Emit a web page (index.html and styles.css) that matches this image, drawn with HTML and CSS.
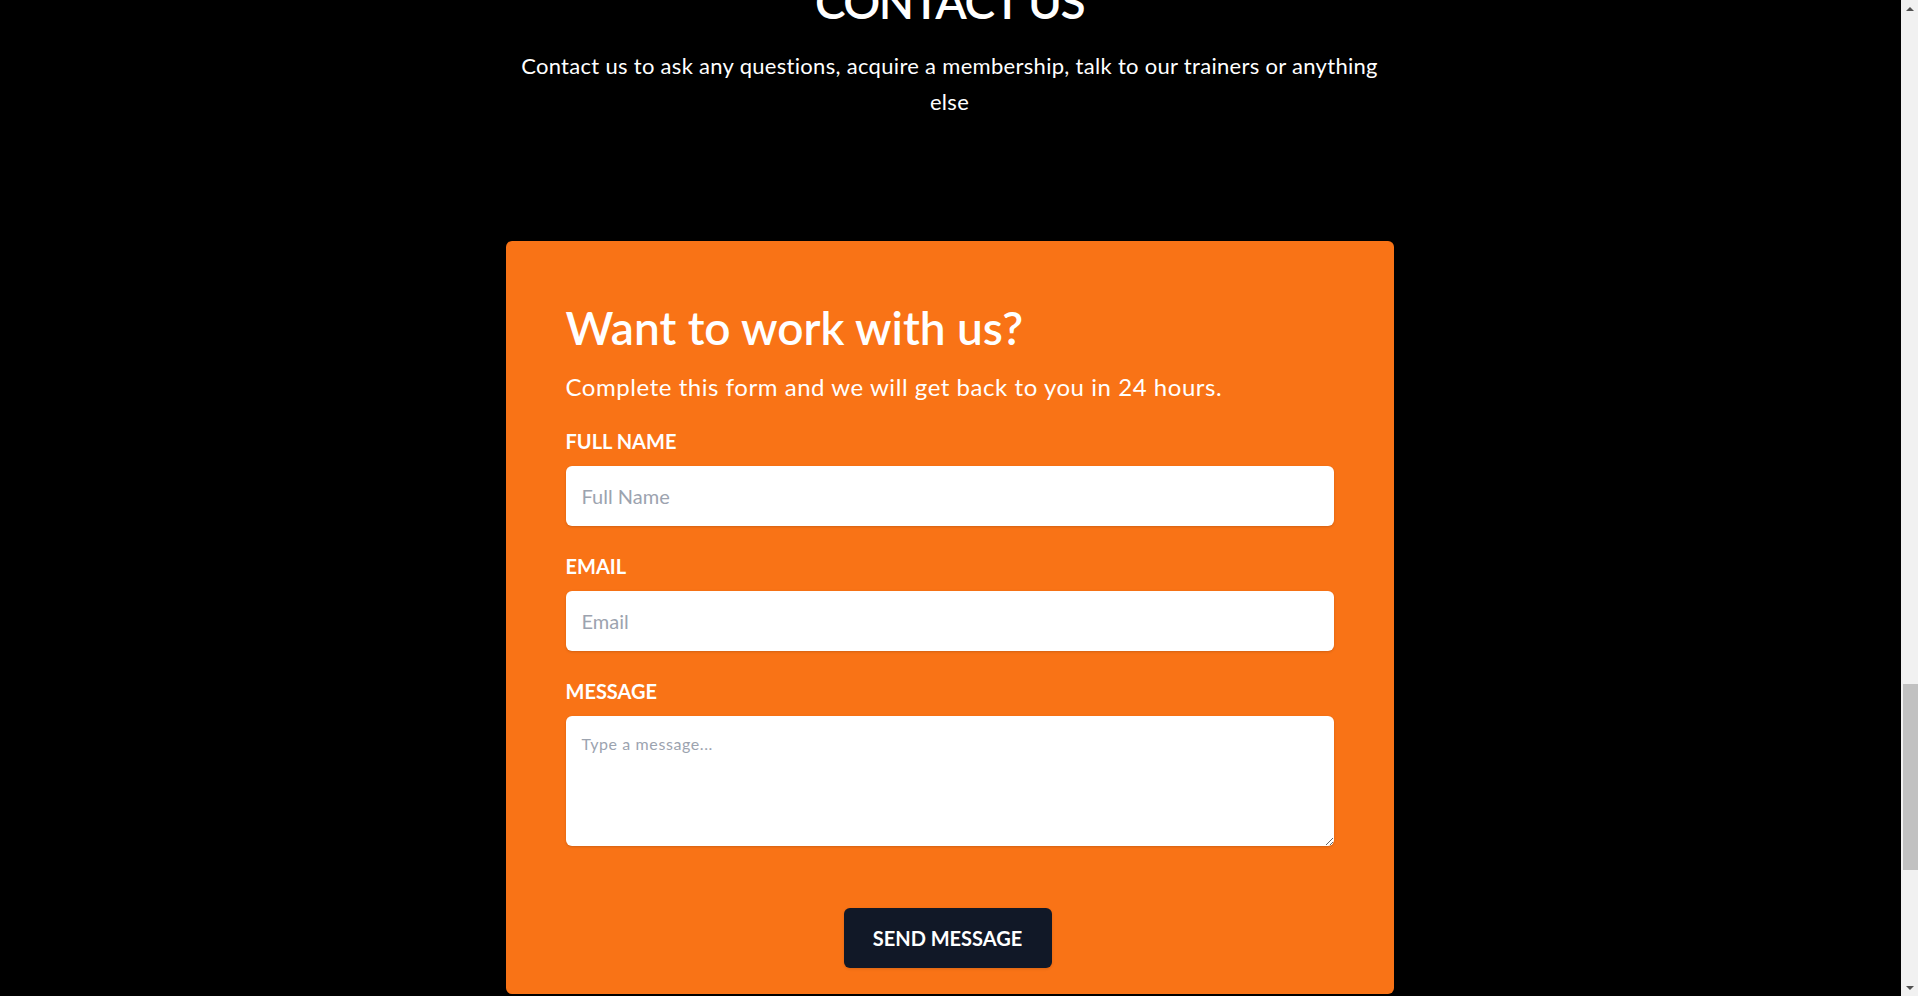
FILE: index.html
```html
<!DOCTYPE html>
<html lang="en">
<head>
<meta charset="utf-8">
<title>Contact Us</title>
<link rel="stylesheet" href="styles.css">
</head>
<body>
<div class="viewport">
  <main class="page">
    <section class="intro">
      <h1 class="intro-title">CONTACT US</h1>
      <p class="intro-text">Contact us to ask any questions, acquire a membership, talk to our trainers or anything else</p>
    </section>
    <section class="card">
      <h2 class="card-title">Want to work with us?</h2>
      <p class="card-sub">Complete this form and we will get back to you in 24 hours.</p>
      <form class="form">
        <div class="field">
          <label class="label" for="name">FULL NAME</label>
          <input class="input" id="name" type="text" placeholder="Full Name">
        </div>
        <div class="field">
          <label class="label" for="email">EMAIL</label>
          <input class="input" id="email" type="email" placeholder="Email">
        </div>
        <div class="field">
          <label class="label" for="msg">MESSAGE</label>
          <textarea class="textarea" id="msg" rows="4" placeholder="Type a message..."></textarea>
        </div>
        <div class="actions">
          <button class="btn" type="button">SEND MESSAGE</button>
        </div>
      </form>
    </section>
  </main>
  <div class="scrollbar" aria-hidden="true">
    <div class="sb-arrow sb-up"></div>
    <div class="sb-track"><div class="sb-thumb"></div></div>
    <div class="sb-arrow sb-down"></div>
  </div>
</div>
</body>
</html>
```

FILE: styles.css
```css
* { box-sizing: border-box; }
html, body { margin: 0; padding: 0; }
body {
  background: #000;
  color: #fff;
  font-family: "Lato", "Open Sans", "Liberation Sans", sans-serif;
  overflow: hidden;
}
.viewport {
  display: flex;
  width: 1918px;
  height: 996px;
  overflow: hidden;
}
.page {
  flex: 1;
  display: flex;
  flex-direction: column;
  align-items: center;
  padding-right: 2px;
  background: #000;
}
.intro {
  display: flex;
  flex-direction: column;
  align-items: center;
  margin-top: -22px;
}
.intro-title {
  margin: 0;
  font-size: 46px;
  line-height: 48px;
  font-weight: 600;
  letter-spacing: -1.5px;
}
.intro-text {
  margin: 22px 0 0;
  max-width: 880px;
  text-align: center;
  font-size: 22px;
  line-height: 36px;
  letter-spacing: 0.3px;
}
.card {
  margin-top: 121px;
  width: 888px;
  background: #f97316;
  border-radius: 6px;
  padding: 63px 60px 26px;
  display: flex;
  flex-direction: column;
}
.card-title {
  margin: 0;
  font-size: 46px;
  line-height: 48px;
  font-weight: 600;
  letter-spacing: 0;
}
.card-sub {
  margin: 19px 0 0;
  font-size: 24px;
  line-height: 32px;
  letter-spacing: 0.55px;
}
.form {
  margin-top: 24px;
  display: flex;
  flex-direction: column;
  gap: 26px;
}
.field {
  display: flex;
  flex-direction: column;
  gap: 11px;
}
.label {
  font-size: 20px;
  line-height: 28px;
  font-weight: 700;
}
.input, .textarea {
  width: 100%;
  border: none;
  border-radius: 6px;
  background: #fff;
  color: #111827;
  font-family: inherit;
  box-shadow: 0 1px 3px 0 rgba(0,0,0,.12), 0 1px 2px -1px rgba(0,0,0,.12);
  outline: none;
}
.input {
  height: 60px;
  padding: 16px;
  font-size: 20px;
  line-height: 28px;
}
.textarea {
  height: 130px;
  padding: 16px;
  font-size: 16px;
  line-height: 24px;
  letter-spacing: 0.6px;
  resize: vertical;
  display: block;
}
.input::placeholder, .textarea::placeholder { color: #9ca3af; }
.actions {
  display: flex;
  justify-content: center;
  margin-top: 36px;
}
.btn {
  width: 208px;
  height: 60px;
  border: none;
  border-radius: 6px;
  background: #111827;
  color: #fff;
  font-family: inherit;
  font-size: 20px;
  font-weight: 700;
  box-shadow: 0 1px 3px 0 rgba(0,0,0,.12);
  margin-right: 4px;
}
.scrollbar {
  width: 17px;
  height: 996px;
  background: #f1f1f1;
  display: flex;
  flex-direction: column;
}
.sb-arrow {
  height: 17px;
  display: flex;
  align-items: center;
  justify-content: center;
}
.sb-up::before {
  content: "";
  border-left: 4px solid transparent;
  border-right: 4px solid transparent;
  border-bottom: 4px solid #505050;
}
.sb-down::before {
  content: "";
  border-left: 4px solid transparent;
  border-right: 4px solid transparent;
  border-top: 4px solid #505050;
}
.sb-track {
  flex: 1;
  padding-top: 667px;
  padding-left: 2px;
}
.sb-thumb {
  height: 186px;
  background: #c1c1c1;
}
```
